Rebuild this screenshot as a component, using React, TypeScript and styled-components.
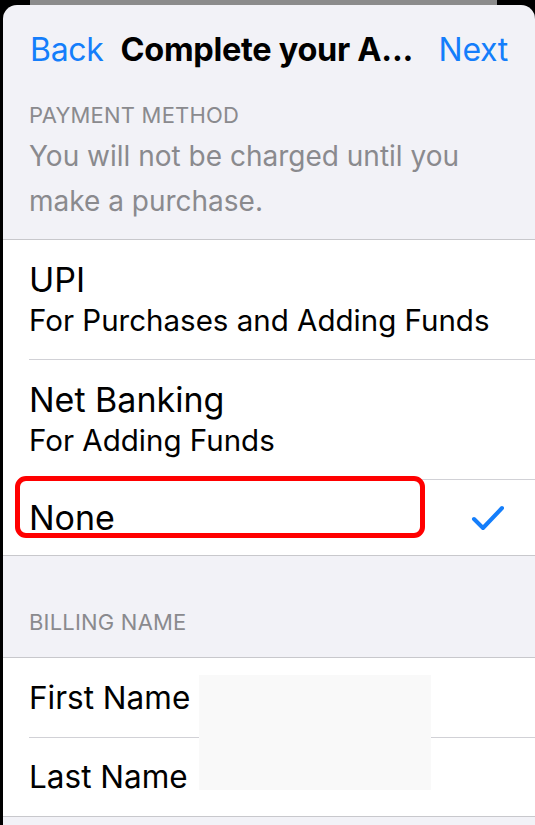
import React from "react";
import styled, { createGlobalStyle } from "styled-components";

const Global = createGlobalStyle`
  html, body { margin: 0; padding: 0; background: #000; }
  body { font-family: Inter, "Noto Sans", "Liberation Sans", sans-serif; -webkit-font-smoothing: antialiased; }
  #root { width: 535px; height: 825px; overflow: hidden; position: relative; }
`;

const Screen = styled.div`
  width: 535px;
  height: 825px;
  background: #000;
  display: flex;
  flex-direction: column;
  overflow: hidden;
  position: relative;
`;

const BehindSheet = styled.div`
  height: 5px;
  margin: 0 38px 0 30px;
  background: #8c8c8c;
  flex-shrink: 0;
`;

const Sheet = styled.div`
  margin-left: 3px;
  flex: 1;
  background: #f2f2f7;
  border-radius: 14px 14px 0 0;
  display: flex;
  flex-direction: column;
  position: relative;
`;

const NavBar = styled.div`
  height: 90px;
  display: flex;
  align-items: flex-start;
  justify-content: space-between;
  padding: 25px 27px 0 27px;
  box-sizing: border-box;
`;

const NavButton = styled.span`
  color: #147efb;
  font-size: 32px;
  line-height: 40px;
  letter-spacing: -0.3px;
`;

const NavTitle = styled.span`
  color: #000;
  font-size: 32.5px;
  font-weight: 700;
  line-height: 40px;
  letter-spacing: -0.3px;
  flex: 1;
  padding-left: 17px;
  white-space: nowrap;
`;

const SectionHeader = styled.div<{ $top: number }>`
  padding: ${(p) => p.$top}px 26px 0 26px;
  color: #8a8a8e;
  font-size: 22px;
  line-height: 26px;
  letter-spacing: 0.2px;
  text-transform: uppercase;
`;

const SectionFooter = styled.div`
  padding: 6px 26px 0 26px;
  color: #8a8a8e;
  font-size: 28px;
  line-height: 45px;
  height: 111px;
  box-sizing: border-box;
`;

const Spacer = styled.div<{ $h: number }>`
  height: ${(p) => p.$h}px;
  flex-shrink: 0;
`;

const Group = styled.div`
  background: #fff;
  border-top: 1px solid #c8c8cc;
  border-bottom: 1px solid #c8c8cc;
`;

const Row = styled.div<{ $height: number; $last?: boolean }>`
  height: ${(p) => p.$height}px;
  margin-left: 26px;
  padding-right: 30px;
  box-sizing: border-box;
  display: flex;
  align-items: center;
  border-bottom: ${(p) => (p.$last ? "none" : "1px solid #d1d1d6")};
`;

const RowText = styled.div`
  flex: 1;
  display: flex;
  flex-direction: column;
`;

const Title = styled.div<{ $size?: number }>`
  font-size: ${(p) => p.$size ?? 34}px;
  line-height: 40px;
  color: #000;
`;

const Subtitle = styled.div`
  font-size: 29.5px;
  line-height: 40px;
  color: #000;
`;

const Check = styled.svg`
  width: 34px;
  height: 26px;
  flex-shrink: 0;
`;

const Highlight = styled.div`
  position: absolute;
  left: 12px;
  top: 471px;
  width: 410px;
  height: 62px;
  border: 5px solid #ff0000;
  border-radius: 11px;
  box-sizing: border-box;
  pointer-events: none;
`;

const Redaction = styled.div`
  position: absolute;
  left: 196px;
  top: 670px;
  width: 232px;
  height: 115px;
  background: #f9f9f9;
`;

export default function App() {
  return (
    <>
      <Global />
      <Screen>
        <BehindSheet />
        <Sheet>
          <NavBar>
            <NavButton>Back</NavButton>
            <NavTitle>Complete your A...</NavTitle>
            <NavButton>Next</NavButton>
          </NavBar>
          <SectionHeader $top={7}>Payment Method</SectionHeader>
          <SectionFooter>
            You will not be charged until you
            <br />
            make a purchase.
          </SectionFooter>
          <Group>
            <Row $height={120}>
              <RowText>
                <Title>UPI</Title>
                <Subtitle>For Purchases and Adding Funds</Subtitle>
              </RowText>
            </Row>
            <Row $height={120}>
              <RowText>
                <Title>Net Banking</Title>
                <Subtitle>For Adding Funds</Subtitle>
              </RowText>
            </Row>
            <Row $height={75} $last>
              <RowText>
                <Title>None</Title>
              </RowText>
              <Check viewBox="0 0 34 26">
                <polyline
                  points="3,14 12,23 31,3"
                  fill="none"
                  stroke="#147efb"
                  strokeWidth="4"
                  strokeLinecap="round"
                  strokeLinejoin="round"
                />
              </Check>
            </Row>
          </Group>
          <SectionHeader $top={53}>Billing Name</SectionHeader>
          <Spacer $h={22} />
          <Group>
            <Row $height={80}>
              <Title $size={31.5}>First Name</Title>
            </Row>
            <Row $height={78} $last>
              <Title $size={31.5}>Last Name</Title>
            </Row>
          </Group>
          <Highlight />
          <Redaction />
        </Sheet>
      </Screen>
    </>
  );
}
